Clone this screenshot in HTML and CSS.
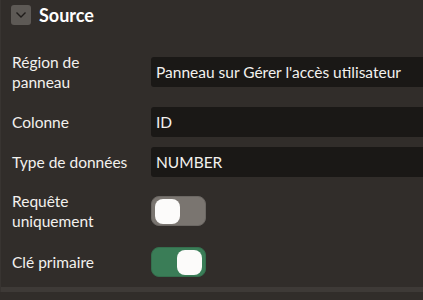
FILE: index.html
```html
<!DOCTYPE html>
<html lang="fr">
<head>
<meta charset="utf-8">
<link rel="stylesheet" href="styles.css">
</head>
<body>
<div class="panel">
  <div class="header">
    <button class="chev" aria-label="Réduire">
      <svg width="12" height="8" viewBox="0 0 12 8"><path d="M1.5 1.5 L6 6 L10.5 1.5" fill="none" stroke="#1f1c1a" stroke-width="1.4"/></svg>
    </button>
    <h2 class="title">Source</h2>
  </div>
  <div class="form">
    <div class="row r1">
      <div class="label">Région de panneau</div>
      <div class="field">Panneau sur Gérer l'accès utilisateur</div>
    </div>
    <div class="row r2">
      <div class="label">Colonne</div>
      <div class="field">ID</div>
    </div>
    <div class="row r3">
      <div class="label">Type de données</div>
      <div class="field">NUMBER</div>
    </div>
    <div class="row r4">
      <div class="label">Requête uniquement</div>
      <div class="toggle-cell"><span class="toggle off"><span class="knob"></span></span></div>
    </div>
    <div class="row r5">
      <div class="label">Clé primaire</div>
      <div class="toggle-cell"><span class="toggle on"><span class="knob"></span></span></div>
    </div>
  </div>
  <div class="bar"></div>
</div>
</body>
</html>
```
FILE: styles.css
```css
html, body {
  margin: 0;
  padding: 0;
  background: #312d2a;
  height: 100%;
  overflow: hidden;
}
body {
  font-family: Lato, "Open Sans", sans-serif;
  color: #f3f1ee;
}
.panel {
  border-left: 1px solid #383431;
}
.header {
  height: 30px;
  display: flex;
  align-items: center;
  padding-left: 10px;
  gap: 8px;
}
.chev {
  width: 20px;
  height: 20px;
  border: 0;
  border-radius: 3px;
  background: #5d5955;
  display: flex;
  align-items: center;
  justify-content: center;
  padding: 0;
}
.title {
  margin: 0;
  font-size: 18px;
  font-weight: 700;
  color: #ffffff;
}
.form {
  display: flex;
  flex-direction: column;
  padding-left: 11px;
}
.row {
  display: grid;
  grid-template-columns: 139px 1fr;
  grid-template-rows: 30px;
  align-items: center;
  height: 30px;
}
.r1 { margin-top: 27px; }
.r2 { margin-top: 20px; }
.r3 { margin-top: 10px; }
.r4 { margin-top: 19px; }
.r5 { margin-top: 21px; }
.label {
  font-size: 15.5px;
  line-height: 20px;
  padding-right: 16px;
}
.field {
  height: 30px;
  background: #1a1816;
  border-radius: 3px 0 0 3px;
  font-size: 15.5px;
  line-height: 30px;
  padding-left: 5px;
  white-space: nowrap;
  overflow: hidden;
}
.toggle-cell {
  height: 30px;
  display: flex;
  align-items: center;
}
.toggle {
  width: 55px;
  height: 30px;
  box-sizing: border-box;
  border-radius: 8px;
  padding: 2px 3px;
  display: flex;
  align-items: center;
}
.toggle.off {
  background: #7a7570;
  border: 1px solid #6b6763;
  justify-content: flex-start;
}
.toggle.on {
  background: #3a7d57;
  border: 1px solid #346e4d;
  justify-content: flex-end;
}
.knob {
  width: 25px;
  height: 25px;
  border-radius: 8px;
  background: #fcfbfa;
}
.bar {
  margin-top: 10px;
  height: 5px;
  background: #3e3a37;
}
```
